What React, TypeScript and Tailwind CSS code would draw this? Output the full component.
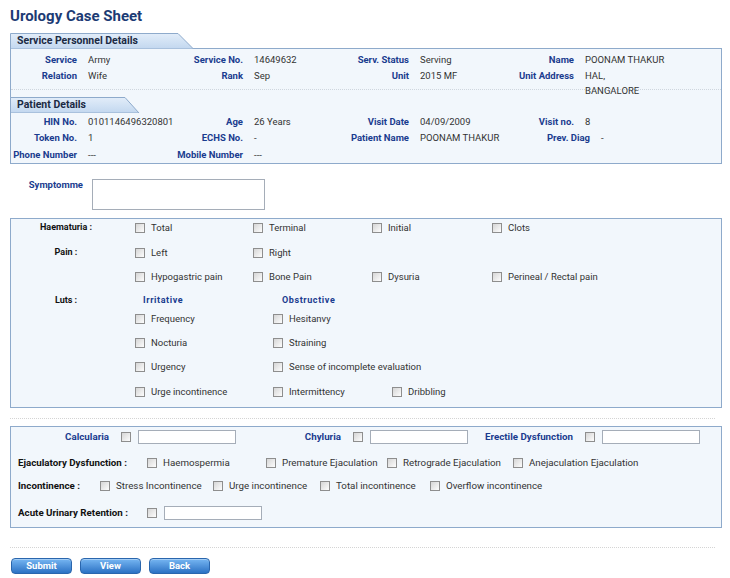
import React from "react";

const lab = "text-[9.5px] font-bold text-[#1a3c8f] text-right pr-[5px] whitespace-nowrap leading-[16px]";
const val = "text-[9.5px] text-[#333] pl-[6px] whitespace-nowrap leading-[16px]";

function Tab({ title, w, pts }: { title: string; w: string; pts: string }) {
  return (
    <div className={`relative h-[16px] ${w}`}>
      <svg className="absolute inset-0 h-full w-full" preserveAspectRatio="none">
        <defs>
          <linearGradient id={`g-${title.length}`} x1="0" y1="0" x2="0" y2="1">
            <stop offset="0" stopColor="#e2edf9" />
            <stop offset="1" stopColor="#c2d7ef" />
          </linearGradient>
        </defs>
        <polygon points={pts} fill={`url(#g-${title.length})`} stroke="#8eaacb" strokeWidth="1" />
      </svg>
      <div className="relative pl-[7px] text-[10.5px] font-bold leading-[16px] text-[#1b2a44] whitespace-nowrap">{title}</div>
    </div>
  );
}

function Cb() {
  return (
    <input
      type="checkbox"
      className="m-0 h-[10px] w-[10px] shrink-0 appearance-none border border-[#8e8e8e] bg-linear-to-br from-[#d6d6d6] to-[#fdfdfd]"
    />
  );
}

function Item({ label, w = "", size = "text-[9.5px]" }: { label: string; w?: string; size?: string }) {
  return (
    <div className={`flex h-[16px] items-center ${w}`}>
      <Cb />
      <span className={`ml-[6px] whitespace-nowrap text-[#333] ${size}`}>{label}</span>
    </div>
  );
}

function Row2({ label, items }: { label?: string; items: string[] }) {
  const widths = ["w-[118px]", "w-[119px]", "w-[120px]", "w-[120px]"];
  return (
    <div className="flex h-[16px] items-center">
      <div className="w-[110px] text-center text-[9px] font-bold text-[#111] whitespace-nowrap">{label}</div>
      {items.map((it, i) => (
        <div key={i} className={`${widths[i]} pl-[14px]`}>
          <Item label={it} />
        </div>
      ))}
    </div>
  );
}

function LutsRow({ items }: { items: string[] }) {
  const widths = ["w-[138px]", "w-[119px]", "w-[119px]"];
  return (
    <div className="flex h-[16px] items-center">
      <div className="w-[110px]" />
      {items.map((it, i) => (
        <div key={i} className={`${widths[i]} pl-[14px]`}>
          <Item label={it} />
        </div>
      ))}
    </div>
  );
}

function Group({ label }: { label: string }) {
  return (
    <div className="flex w-[232px] items-center">
      <div className="w-[98px] text-right text-[9.75px] font-bold text-[#1a3c8f] whitespace-nowrap">{label}</div>
      <div className="ml-[12px] flex">
        <Cb />
      </div>
      <input type="text" className="ml-[7px] h-[14px] w-[98px] border border-[#a5adb8] bg-white" />
    </div>
  );
}

function Btn({ label }: { label: string }) {
  return (
    <button className="flex h-[16px] w-[61px] items-center justify-center rounded-[4px] border border-[#2a66ad] bg-linear-to-b from-[#76b6f2] to-[#2b72c4] text-[9.5px] font-bold text-white shadow-[inset_0_1px_0_rgba(255,255,255,0.35)]">
      {label}
    </button>
  );
}

export default function App() {
  const s3 = "text-[9.75px]";
  return (
    <div className="h-[578px] w-[730px] overflow-hidden bg-white pl-[10px] font-[Roboto,sans-serif]">
      <h1 className="pt-[7px] text-[15px] font-bold leading-[18px] text-[#1c3b74]">Urology Case Sheet</h1>

      <div className="mt-[8px]">
        <Tab title="Service Personnel Details" w="w-[184px]" pts="0.5,16 0.5,0.5 168,0.5 183.5,16" />
        <div className="-mt-[1px] w-[712px] border border-[#8eaacb] bg-[#f2f7fc]">
          <div className="grid grid-cols-[71px_94px_72px_94px_72px_93px_72px_1fr] pt-[3px]">
            <div className={lab}>Service</div>
            <div className={val}>Army</div>
            <div className={lab}>Service No.</div>
            <div className={val}>14649632</div>
            <div className={lab}>Serv. Status</div>
            <div className={val}>Serving</div>
            <div className={lab}>Name</div>
            <div className={val}>POONAM THAKUR</div>

            <div className={lab}>Relation</div>
            <div className={val}>Wife</div>
            <div className={lab}>Rank</div>
            <div className={val}>Sep</div>
            <div className={lab}>Unit</div>
            <div className={val}>2015 MF</div>
            <div className={lab}>Unit Address</div>
            <div className={`${val} h-[16px] overflow-visible`}>
              <div>HAL,</div>
              <div className="leading-[14px]">BANGALORE</div>
            </div>
          </div>
          <div className="mt-[5px] border-t border-dotted border-[#cfd6de]" />
          <div className="mt-[7px] -ml-[1px]">
            <Tab title="Patient Details" w="w-[130px]" pts="0.5,16 0.5,0.5 115,0.5 129,16" />
          </div>
          <div className="mt-[1px] grid grid-cols-[71px_94px_72px_94px_72px_93px_72px_1fr]">
            <div className={lab}>HIN No.</div>
            <div className={val}>0101146496320801</div>
            <div className={lab}>Age</div>
            <div className={val}>26 Years</div>
            <div className={lab}>Visit Date</div>
            <div className={val}>04/09/2009</div>
            <div className={lab}>Visit no.</div>
            <div className={val}>8</div>

            <div className={lab}>Token No.</div>
            <div className={val}>1</div>
            <div className={lab}>ECHS No.</div>
            <div className={val}>-</div>
            <div className={lab}>Patient Name</div>
            <div className={val}>POONAM THAKUR</div>
            <div className="col-span-2 flex">
              <div className={`${lab} w-[88px]`}>Prev. Diag</div>
              <div className={val}>-</div>
            </div>
          </div>
          <div className="mt-[1px] grid grid-cols-[71px_94px_72px_94px_72px_93px_72px_1fr]">
            <div className={lab}>Phone Number</div>
            <div className={val}>---</div>
            <div className={lab}>Mobile Number</div>
            <div className={val}>---</div>
          </div>
        </div>
      </div>

      <div className="mt-[15px] flex">
        <div className="w-[73px] text-right text-[9.5px] font-bold leading-[12px] text-[#1a3c8f]">Symptomme</div>
        <textarea className="ml-[9px] h-[31px] w-[173px] resize-none border border-[#a5adb8] bg-white" />
      </div>

      <div className="mt-[8px] flex w-[712px] flex-col border border-[#8eaacb] bg-[#f2f7fc] pb-[7px] pt-[1px]">
        <Row2 label="Haematuria :" items={["Total", "Terminal", "Initial", "Clots"]} />
        <div className="mt-[9px]">
          <Row2 label="Pain :" items={["Left", "Right"]} />
        </div>
        <div className="mt-[8px]">
          <Row2 items={["Hypogastric pain", "Bone Pain", "Dysuria", "Perineal / Rectal pain"]} />
        </div>
        <div className="mt-[8px] flex h-[16px] items-center">
          <div className="w-[110px] text-center text-[9px] font-bold text-[#111]">Luts :</div>
          <div className="w-[138px] pl-[22px] text-[9px] font-bold tracking-[0.6px] text-[#1a3c8f]">Irritative</div>
          <div className="pl-[23px] text-[9px] font-bold tracking-[0.6px] text-[#1a3c8f]">Obstructive</div>
        </div>
        <div className="mt-[2px]">
          <LutsRow items={["Frequency", "Hesitanvy"]} />
        </div>
        <div className="mt-[8px]">
          <LutsRow items={["Nocturia", "Straining"]} />
        </div>
        <div className="mt-[8px]">
          <LutsRow items={["Urgency", "Sense of incomplete evaluation"]} />
        </div>
        <div className="mt-[9px]">
          <LutsRow items={["Urge incontinence", "Intermittency", "Dribbling"]} />
        </div>
      </div>

      <div className="mt-[10px] w-[705px] border-t border-dotted border-[#d4d4d4]" />

      <div className="mt-[7px] w-[712px] border border-[#8eaacb] bg-[#f2f7fc] pb-[6px] pt-[2px]">
        <div className="flex h-[16px] items-center">
          <Group label="Calcularia" />
          <Group label="Chyluria" />
          <Group label="Erectile Dysfunction" />
        </div>
        <div className="mt-[10px] flex h-[16px] items-center pl-[7px]">
          <div className="w-[129px] text-[9.75px] font-bold text-[#111] whitespace-nowrap">Ejaculatory Dysfunction :</div>
          <Item label="Haemospermia" w="w-[119px]" size={s3} />
          <Item label="Premature Ejaculation" w="w-[121px]" size={s3} />
          <Item label="Retrograde Ejaculation" w="w-[126px]" size={s3} />
          <Item label="Anejaculation Ejaculation" size={s3} />
        </div>
        <div className="mt-[7px] flex h-[16px] items-center pl-[7px]">
          <div className="w-[82px] text-[9.75px] font-bold text-[#111] whitespace-nowrap">Incontinence :</div>
          <Item label="Stress Incontinence" w="w-[113px]" size={s3} />
          <Item label="Urge incontinence" w="w-[107px]" size={s3} />
          <Item label="Total incontinence" w="w-[110px]" size={s3} />
          <Item label="Overflow incontinence" size={s3} />
        </div>
        <div className="mt-[11px] flex h-[16px] items-center pl-[7px]">
          <div className="w-[129px] text-[9.75px] font-bold text-[#111] whitespace-nowrap">Acute Urinary Retention :</div>
          <Cb />
          <input type="text" className="ml-[7px] h-[14px] w-[98px] border border-[#a5adb8] bg-white" />
        </div>
      </div>

      <div className="mt-[19px] w-[705px] border-t border-dotted border-[#d4d4d4]" />

      <div className="ml-[1px] mt-[10px] flex gap-[8px]">
        <Btn label="Submit" />
        <Btn label="View" />
        <Btn label="Back" />
      </div>
    </div>
  );
}
